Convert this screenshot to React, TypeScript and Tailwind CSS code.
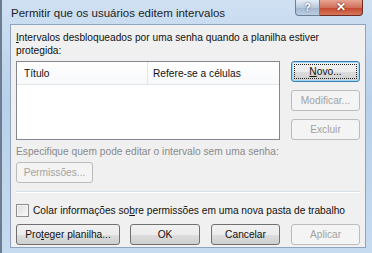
import React from "react";

const font = { fontFamily: '"Liberation Sans", Arial, sans-serif' };

type BtnProps = {
  children: React.ReactNode;
  className?: string;
  disabled?: boolean;
  focused?: boolean;
};

const WinButton = ({ children, className = "", disabled, focused }: BtnProps) => {
  if (disabled) {
    return (
      <div
        className={`h-[21px] flex items-center justify-center rounded-[3px] border border-[#bcbcbc] bg-[#f4f4f4] text-[#a3a3a3] ${className}`}
      >
        {children}
      </div>
    );
  }
  return (
    <div
      className={`h-[21px] flex items-center justify-center rounded-[3px] border ${
        focused ? "border-[#3c7fb1] shadow-[inset_0_0_0_1px_#9fd5f5]" : "border-[#707070]"
      } bg-[linear-gradient(to_bottom,#f2f2f2_0%,#ebebeb_50%,#dddddd_51%,#cfcfcf_100%)] text-[#111] ${className}`}
    >
      {focused ? (
        <div className="flex-1 self-stretch m-[2px] flex items-center justify-center border border-dotted border-[#222]">
          {children}
        </div>
      ) : (
        children
      )}
    </div>
  );
};

export default function App() {
  return (
    <div
      className="w-[372px] h-[253px] overflow-hidden flex flex-col bg-[linear-gradient(to_bottom,#cfe0f2,#b8d0ea_40%,#c6dbf0)] border-l-2 border-[#6b7d8f] text-[10.2px] leading-[13px] whitespace-nowrap"
      style={font}
    >
      {/* Title bar */}
      <div className="h-[24px] flex items-start shrink-0">
        <div className="pl-[9px] pt-[6px] text-[11.5px] leading-[14px] text-[#1e1e1e]">
          Permitir que os usuários editem intervalos
        </div>
        <div className="ml-auto mr-[9px] flex">
          <div className="w-[25px] h-[16px] rounded-bl-[4px] border border-t-0 border-[#6c7f95] bg-[linear-gradient(to_bottom,#e3edf7,#b7cbe0_50%,#9fb6cf_51%,#bccfe2)] flex items-center justify-center text-[11px] font-bold text-white [text-shadow:0_0_2px_#334]">
            ?
          </div>
          <div className="w-[43px] h-[16px] rounded-br-[4px] border border-t-0 border-l-0 border-[#6b2a22] bg-[linear-gradient(to_bottom,#e8a493,#d0715b_50%,#c2452c_51%,#d6785c)] flex items-center justify-center text-[12px] font-bold text-white [text-shadow:0_0_2px_#400]">
            ✕
          </div>
        </div>
      </div>

      {/* Content */}
      <div className="ml-[8px] mr-[6px] h-[224px] border border-[#8ea4bf] bg-[#f0f0f0] px-[5px] pt-[6px] text-[#111] flex flex-col">
        <div>
          <span className="underline underline-offset-1">I</span>ntervalos desbloqueados por uma senha quando a planilha estiver
          <br />
          protegida:
        </div>

        <div className="mt-[4px] flex">
          <div className="w-[264px] h-[79px] border border-[#828790] bg-white">
            <div className="h-[23px] flex border-b border-[#e5e5e5] bg-[linear-gradient(to_bottom,#ffffff,#f7f8fa)]">
              <div className="w-[131px] border-r border-[#e5e5e5] pl-[7px] flex items-center">Título</div>
              <div className="pl-[5px] flex items-center">Refere-se a células</div>
            </div>
          </div>
          <div className="ml-[11px] flex flex-col gap-[8px]">
            <WinButton focused className="w-[69px]">
              <span>
                <span className="underline underline-offset-1">N</span>ovo...
              </span>
            </WinButton>
            <WinButton disabled className="w-[69px]">Modificar...</WinButton>
            <WinButton disabled className="w-[69px]">Excluir</WinButton>
          </div>
        </div>

        <div className="mt-[5px] text-[#8a8a8a]">Especifique quem pode editar o intervalo sem uma senha:</div>
        <WinButton disabled className="mt-[4px] w-[77px]">Permissões...</WinButton>

        <div className="mt-[8px] w-[344px] h-px bg-[#d5dfe5] border-b border-white box-content" />

        <div className="mt-[11px] flex items-center">
          <div className="w-[13px] h-[13px] border border-[#8e8f8f] bg-[linear-gradient(135deg,#dcdcdc,#fbfbfb)] shadow-[inset_0_0_0_1px_#f4f4f4]" />
          <span className="ml-[4px]">
            Colar informações so<span className="underline underline-offset-1">b</span>re permissões em uma nova pasta de trabalho
          </span>
        </div>

        <div className="mt-[7px] flex">
          <WinButton className="w-[104px]">
            <span>
              Pro<span className="underline underline-offset-1">t</span>eger planilha...
            </span>
          </WinButton>
          <WinButton className="ml-[10px] w-[70px]">OK</WinButton>
          <WinButton className="ml-[11px] w-[69px]">Cancelar</WinButton>
          <WinButton disabled className="ml-[11px] w-[69px]">Aplicar</WinButton>
        </div>
      </div>
    </div>
  );
}
